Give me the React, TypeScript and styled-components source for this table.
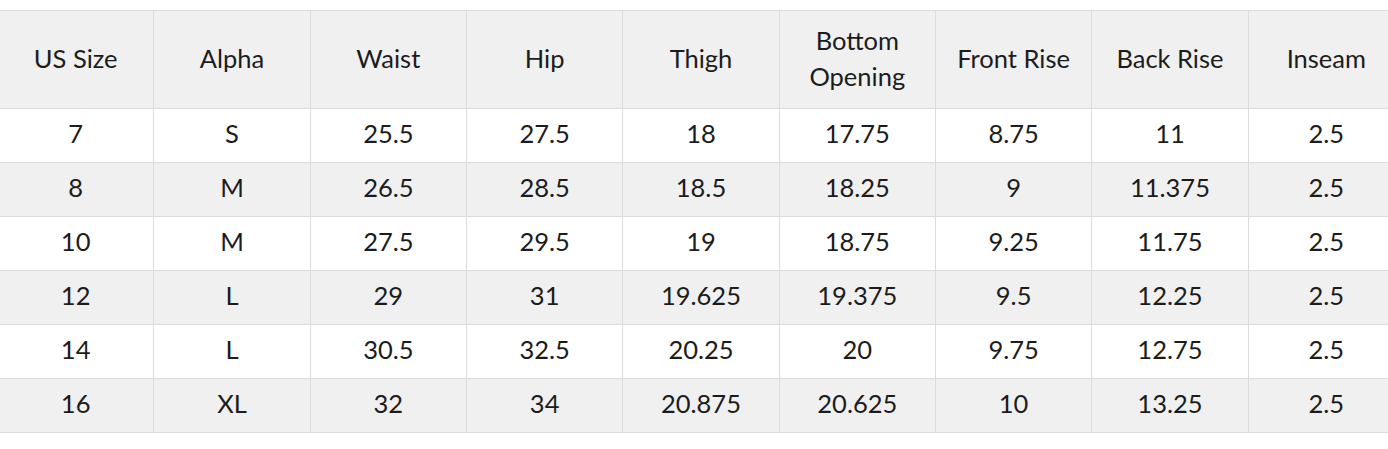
import styled, { createGlobalStyle } from 'styled-components';

const GlobalStyle = createGlobalStyle`
  html, body {
    margin: 0;
    padding: 0;
    background: #ffffff;
    overflow: hidden;
  }
`;

const HEADERS = ['US Size', 'Alpha', 'Waist', 'Hip', 'Thigh', 'Bottom Opening', 'Front Rise', 'Back Rise', 'Inseam'];

const ROWS: string[][] = [
  ['7', 'S', '25.5', '27.5', '18', '17.75', '8.75', '11', '2.5'],
  ['8', 'M', '26.5', '28.5', '18.5', '18.25', '9', '11.375', '2.5'],
  ['10', 'M', '27.5', '29.5', '19', '18.75', '9.25', '11.75', '2.5'],
  ['12', 'L', '29', '31', '19.625', '19.375', '9.5', '12.25', '2.5'],
  ['14', 'L', '30.5', '32.5', '20.25', '20', '9.75', '12.75', '2.5'],
  ['16', 'XL', '32', '34', '20.875', '20.625', '10', '13.25', '2.5'],
];

const Page = styled.div`
  padding-top: 10px;
  width: 1388px;
  overflow: hidden;
`;

const Table = styled.table`
  border-collapse: collapse;
  table-layout: fixed;
  width: 1408px;
  margin-left: -3px;
  font-family: Lato, 'Open Sans', sans-serif;
  color: #1c1c1c;
`;

const HeadCell = styled.th`
  box-sizing: border-box;
  background: #f0f0f0;
  border: 1px solid #dcdcdc;
  height: 98px;
  padding: 0 20px 3px;
  font-size: 25.5px;
  font-weight: 400;
  line-height: 36px;
  text-align: center;
`;

const Row = styled.tr<{ $striped: boolean }>`
  background: ${(p) => (p.$striped ? '#f0f0f0' : '#ffffff')};
`;

const Cell = styled.td`
  box-sizing: border-box;
  border: 1px solid #dcdcdc;
  height: 54px;
  padding: 0 0 5px;
  font-size: 25.5px;
  text-align: center;
`;

const App = () => {
  return (
    <Page>
      <GlobalStyle />
      <Table>
        <thead>
          <tr>
            {HEADERS.map((h) => (
              <HeadCell key={h}>{h}</HeadCell>
            ))}
          </tr>
        </thead>
        <tbody>
          {ROWS.map((row, i) => (
            <Row key={row[0]} $striped={i % 2 === 1}>
              {row.map((v, j) => (
                <Cell key={j}>{v}</Cell>
              ))}
            </Row>
          ))}
        </tbody>
      </Table>
    </Page>
  );
};

export default App;
